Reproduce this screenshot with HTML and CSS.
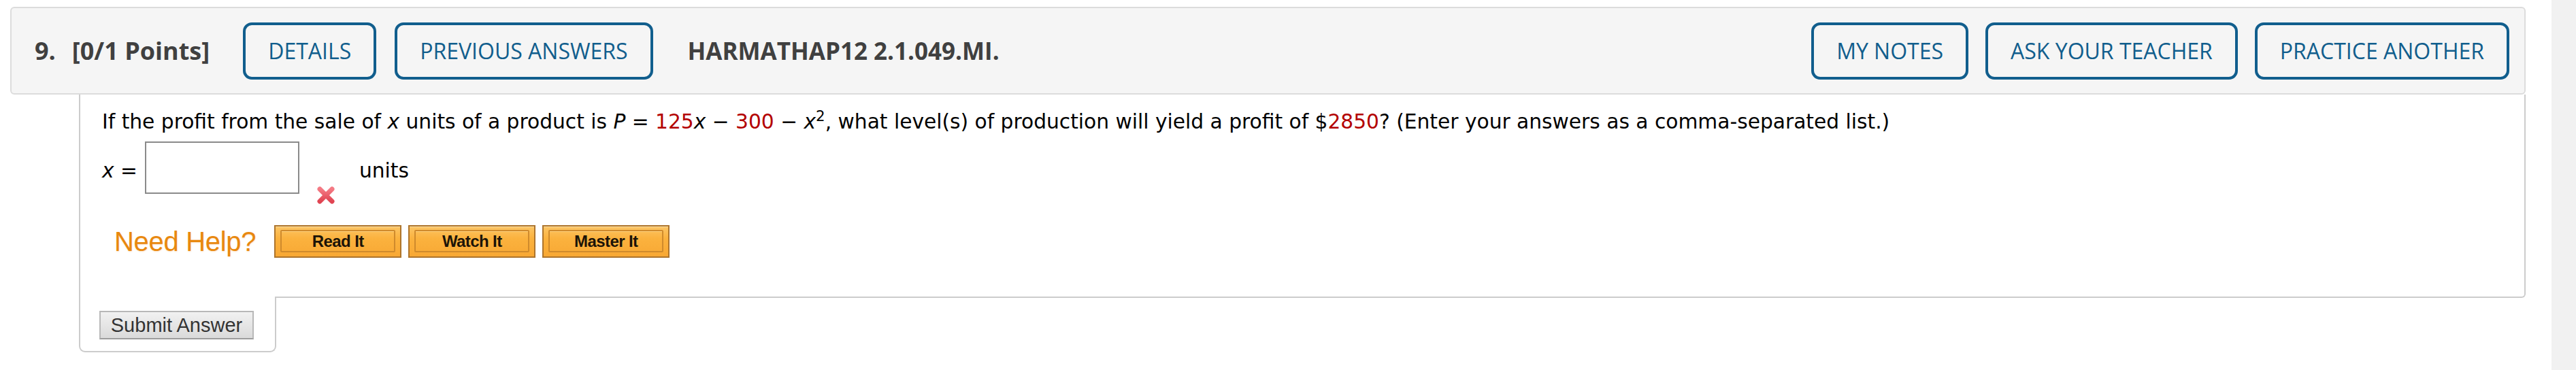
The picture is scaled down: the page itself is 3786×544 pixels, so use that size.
FILE: index.html
```html
<!DOCTYPE html>
<html>
<head>
<meta charset="utf-8">
<link rel="stylesheet" href="styles.css">
</head>
<body>
<div class="page">
  <div class="header">
    <span class="qnum">9.</span>
    <span class="points">[0/1 Points]</span>
    <button class="hbtn btn-details">DETAILS</button>
    <button class="hbtn btn-prev">PREVIOUS ANSWERS</button>
    <span class="qcode">HARMATHAP12 2.1.049.MI.</span>
    <span class="spacer"></span>
    <button class="hbtn">MY NOTES</button>
    <button class="hbtn">ASK YOUR TEACHER</button>
    <button class="hbtn">PRACTICE ANOTHER</button>
  </div>
  <div class="panel">
    <p class="question">If the profit from the sale of <i>x</i> units of a product is <i>P</i> = <span class="red">125</span><i>x</i> &minus; <span class="red">300</span> &minus; <i>x</i><span class="sup">2</span>, what level(s) of production will yield a profit of $<span class="red">2850</span>? (Enter your answers as a comma-separated list.)</p>
    <div class="answer">
      <span class="lbl"><i>x</i> =</span>
      <span class="inputbox"></span>
      <svg class="wrong" viewBox="0 0 30 30" width="30" height="30">
        <defs>
          <linearGradient id="xg" x1="0" y1="0" x2="0" y2="1">
            <stop offset="0" stop-color="#f47a84"/>
            <stop offset="1" stop-color="#e04452"/>
          </linearGradient>
        </defs>
        <path d="M6 6 L24 24 M24 6 L6 24" stroke="url(#xg)" stroke-width="7" stroke-linecap="round"/>
      </svg>
      <span class="units">units</span>
    </div>
    <div class="help">
      <span class="needhelp">Need Help?</span>
      <span class="hb"><span class="hbi">Read It</span></span>
      <span class="hb"><span class="hbi">Watch It</span></span>
      <span class="hb"><span class="hbi">Master It</span></span>
    </div>
  </div>
  <div class="tab">
    <button class="submit">Submit Answer</button>
  </div>
</div>
<div class="scrollbar"></div>
</body>
</html>
```
FILE: styles.css
```css
html, body {
  margin: 0;
  padding: 0;
  background: #fff;
}
body {
  display: flex;
  height: 544px;
  overflow: hidden;
}
.page {
  flex: 1;
  padding: 10px 38px 0 15px;
}
.scrollbar {
  width: 36px;
  background: #f1f1f1;
}
.header {
  box-sizing: border-box;
  height: 129px;
  border: 2px solid #dcdcdc;
  border-radius: 6px;
  background: #f5f5f5;
  display: flex;
  align-items: center;
  padding: 0 22px 0 34px;
  font-family: "Open Sans", sans-serif;
}
.qnum, .points, .qcode {
  font-weight: 700;
  font-size: 36px;
  color: #404040;
  white-space: nowrap;
}
.points {
  margin-left: 24px;
  margin-right: 49px;
}
.qcode {
  margin-left: 51px;
  font-size: 35px;
}
.spacer {
  flex: 1;
}
.hbtn {
  box-sizing: border-box;
  height: 84px;
  border: 4px solid #115e8d;
  border-radius: 13px;
  background: transparent;
  color: #115e8d;
  font-family: "Open Sans", sans-serif;
  font-size: 32px;
  font-weight: 400;
  padding: 0 33px;
  margin-left: 25px;
  white-space: nowrap;
}
.btn-details {
  margin-left: 0;
}
.btn-prev {
  margin-left: 27px;
}
.panel {
  margin-left: 101px;
  border: 2px solid #cccccc;
  border-top: none;
  border-radius: 0 0 6px 0;
  height: 297px;
  box-sizing: content-box;
  padding: 0 0 0 32px;
  font-family: "DejaVu Sans", Verdana, sans-serif;
  font-size: 29.7px;
  color: #000;
}
.question {
  margin: 0;
  padding-top: 23px;
  line-height: 34px;
  white-space: nowrap;
}
.red {
  color: #b30000;
}
.sup {
  font-size: 0.72em;
  vertical-align: 0.5em;
  line-height: 0;
}
.answer {
  display: flex;
  align-items: flex-start;
  margin-top: 12px;
}
.lbl {
  margin-top: 26px;
  line-height: 34px;
  margin-right: 11px;
}
.inputbox {
  box-sizing: border-box;
  width: 227px;
  height: 77px;
  border: 2px solid #8a8a8a;
  background: #fff;
}
.wrong {
  margin-top: 64px;
  margin-left: 24px;
  margin-right: 34px;
}
.units {
  margin-top: 26px;
  line-height: 34px;
}
.help {
  display: flex;
  align-items: center;
  margin-top: 29px;
  margin-left: 18px;
  gap: 10px;
}
.needhelp {
  font-family: "Liberation Sans", Arial, sans-serif;
  font-size: 40px;
  color: #e8880f;
  text-shadow: 0 1px 2px rgba(240, 170, 90, 0.35);
  margin-right: 17px;
  letter-spacing: -0.3px;
}
.hb {
  box-sizing: border-box;
  width: 187px;
  height: 48px;
  border: 2px solid #ad742c;
  background: linear-gradient(#fcc565, #fbb23e 40%, #f8a834);
  box-shadow: inset 0 1px 0 #ffe1a6;
  padding: 5px 7px 6px 7px;
  display: flex;
}
.hbi {
  flex: 1;
  box-sizing: border-box;
  border: 2px solid #cf8a2c;
  border-radius: 2px;
  box-shadow: inset 0 1px 0 #ffd27d;
  display: flex;
  align-items: center;
  justify-content: center;
  font-family: "Liberation Sans", Arial, sans-serif;
  font-weight: 700;
  font-size: 24px;
  color: #1c1408;
  letter-spacing: -0.6px;
}
.tab {
  box-sizing: border-box;
  margin-left: 101px;
  margin-top: -2px;
  width: 290px;
  height: 82px;
  background: #fff;
  border: 2px solid #cccccc;
  border-top: none;
  border-radius: 0 0 9px 9px;
  padding: 21px 0 0 28px;
  position: relative;
}
.submit {
  box-sizing: border-box;
  width: 227px;
  height: 42px;
  border: 2px solid #b8b8b8;
  border-bottom-color: #9c9c9c;
  background: linear-gradient(#f1f1f1, #dadada);
  font-family: "Liberation Sans", Arial, sans-serif;
  font-size: 29px;
  color: #333;
  padding: 0;
  line-height: 36px;
}
```
